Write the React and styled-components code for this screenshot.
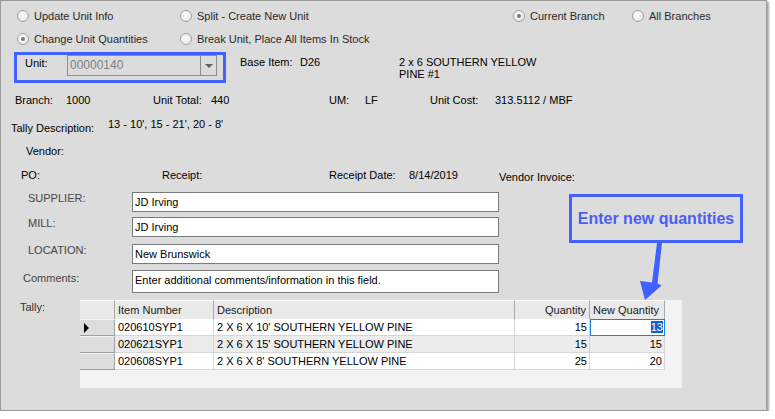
import React from "react";
import styled, { createGlobalStyle } from "styled-components";

const GlobalStyle = createGlobalStyle`
    body {
        margin: 0;
        background: #ffffff;
        font-family: "Liberation Sans", Arial, sans-serif;
        font-size: 11px;
        color: #000;
    }
`

const Window = styled.div`
    position: relative;
    box-sizing: border-box;
    width: 767px;
    height: 411px;
    background: #dcdcdc;
    border: 1px solid #9a9a9a;
    box-shadow: 2px 2px 2px rgba(0, 0, 0, 0.35);
`

const Row = styled.div`
    display: flex;
    align-items: flex-start;
    margin-top: ${(props) => props.$mt || 0}px;
    padding-left: ${(props) => props.$pl || 0}px;
    height: ${(props) => props.$h || 14}px;
    line-height: 14px;
    white-space: nowrap;
`

const Cell = styled.div`
    width: ${(props) => (props.$w ? props.$w + "px" : "auto")};
    padding-top: ${(props) => props.$pt || 0}px;
    color: ${(props) => props.$color || "#000"};
    flex-shrink: 0;
`

const RadioItem = styled.label`
    display: flex;
    align-items: center;
    width: ${(props) => props.$w}px;
    height: 16px;
    color: #2a2a2a;
    flex-shrink: 0;
`

const RadioDot = styled.span`
    box-sizing: border-box;
    width: 12px;
    height: 12px;
    margin-right: 5px;
    border-radius: 50%;
    border: 1px solid #a2a2a2;
    background: radial-gradient(circle at 40% 40%, #ffffff 0%, #ececec 60%, #d6d6d6 100%);
    display: flex;
    align-items: center;
    justify-content: center;

    &::after {
        content: "";
        width: 4px;
        height: 4px;
        border-radius: 50%;
        background: ${(props) => (props.$checked ? "#7a7a7a" : "transparent")};
    }
`

const UnitBox = styled.div`
    box-sizing: border-box;
    display: flex;
    align-items: flex-start;
    width: 212px;
    height: 31px;
    margin-left: 13px;
    border: 3px solid #4060ff;
`

const UnitLabel = styled.div`
    width: 50px;
    padding-left: 8px;
    padding-top: 1px;
    box-sizing: border-box;
    line-height: 14px;
`

const Combo = styled.div`
    box-sizing: border-box;
    display: flex;
    width: 150px;
    height: 21px;
    border: 1px solid #8c8c8c;
    background: #dcdcdc;
`

const ComboText = styled.div`
    flex: 1;
    padding-left: 2px;
    line-height: 19px;
    font-size: 12px;
    color: #808080;
`

const ComboButton = styled.div`
    width: 15px;
    border-left: 1px solid #8c8c8c;
    display: flex;
    align-items: center;
    justify-content: center;

    &::after {
        content: "";
        border-left: 4px solid transparent;
        border-right: 4px solid transparent;
        border-top: 4px solid #606060;
    }
`

const BaseItem = styled.div`
    display: flex;
    margin-left: 14px;
    padding-top: 3px;
    line-height: 14px;
`

const Description = styled.div`
    padding-top: 1px;
    line-height: 12px;
    font-size: 11px;
`

const FieldLabel = styled.div`
    box-sizing: border-box;
    width: 109px;
    padding-left: ${(props) => props.$indent || 0}px;
    padding-top: ${(props) => props.$pt || 0}px;
    line-height: 13px;
    color: #454545;
`

const TextBox = styled.div`
    box-sizing: border-box;
    width: 367px;
    height: ${(props) => props.$h || 20}px;
    padding: 1px 2px 0;
    line-height: 16px;
    background: #ffffff;
    border: 1px solid #7a7a7a;
`

const TallyLabel = styled.div`
    width: 60px;
    color: #333;
`

const Grid = styled.div`
    width: 602px;
    height: 88px;
    background: #f3f3f3;
    display: grid;
    grid-template-columns: 35px 99px 301px 75px 75px;
    grid-template-rows: 19px 17px 17px 17px;
    align-content: start;
    justify-content: start;
`

const HeadCell = styled.div`
    box-sizing: border-box;
    background: #e9e9e9;
    border-right: 1px solid #a8a8a8;
    border-top: 1px solid #ffffff;
    padding: 0 3px;
    line-height: 18px;
    font-size: 11px;
    color: #1a1a1a;
    text-align: ${(props) => props.$align || "left"};
`

const RowHead = styled.div`
    box-sizing: border-box;
    background: #dddddd;
    border-right: 1px solid #a0a0a0;
    border-bottom: 1px solid #a0a0a0;
    border-top: 1px solid #f4f4f4;
    display: flex;
    align-items: center;
    padding-left: 4px;

    &::after {
        content: "";
        display: ${(props) => (props.$current ? "block" : "none")};
        border-top: 5px solid transparent;
        border-bottom: 5px solid transparent;
        border-left: 5px solid #000;
    }
`

const DataCell = styled.div`
    box-sizing: border-box;
    background: ${(props) => (props.$alt ? "#ececec" : "#ffffff")};
    border-right: 1px solid #d6d6d6;
    border-bottom: 1px solid #d6d6d6;
    padding: 0 2px 0 3px;
    line-height: 16px;
    font-size: 11px;
    text-align: ${(props) => props.$align || "left"};
    ${(props) =>
        props.$selected &&
        `
        border: 1px solid #1a7fe0;
        padding-right: 1px;
        line-height: 15px;
    `}
`

const Highlight = styled.span`
    background: #0a64d0;
    color: #ffffff;
`

const Callout = styled.div`
    position: absolute;
    left: 568px;
    top: 193px;
    box-sizing: border-box;
    width: 174px;
    height: 49px;
    border: 3px solid #4060ff;
    display: flex;
    align-items: center;
    justify-content: center;
    font-size: 16px;
    font-weight: bold;
    color: #4a5ef5;
`

const Arrow = styled.svg`
    position: absolute;
    left: 635px;
    top: 239px;
`

const rows = [
    { item: "020610SYP1", desc: "2 X 6 X 10' SOUTHERN YELLOW PINE", qty: 15, newQty: 13 },
    { item: "020621SYP1", desc: "2 X 6 X 15' SOUTHERN YELLOW PINE", qty: 15, newQty: 15 },
    { item: "020608SYP1", desc: "2 X 6 X 8' SOUTHERN YELLOW PINE", qty: 25, newQty: 20 },
];

function Radio({ w, checked, children }) {
    return (
        <RadioItem $w={w}>
            <RadioDot $checked={checked} />
            {children}
        </RadioItem>
    );
}

function Field({ label, indent, pt, mt, h, children }) {
    return (
        <Row $mt={mt} $pl={22} $h={h || 20}>
            <FieldLabel $indent={indent} $pt={pt}>{label}</FieldLabel>
            <TextBox $h={h}>{children}</TextBox>
        </Row>
    );
}

function App() {
    return (
        <>
            <GlobalStyle />
            <Window>
                <Row $mt={7} $pl={16} $h={16}>
                    <Radio w={163}>Update Unit Info</Radio>
                    <Radio w={333}>Split - Create New Unit</Radio>
                    <Radio w={119} checked>Current Branch</Radio>
                    <Radio w={120}>All Branches</Radio>
                </Row>
                <Row $mt={7} $pl={16} $h={16}>
                    <Radio w={163} checked>Change Unit Quantities</Radio>
                    <Radio w={333}>Break Unit, Place All Items In Stock</Radio>
                </Row>

                <Row $mt={5} $h={31}>
                    <UnitBox>
                        <UnitLabel>Unit:</UnitLabel>
                        <Combo>
                            <ComboText>00000140</ComboText>
                            <ComboButton />
                        </Combo>
                    </UnitBox>
                    <BaseItem>
                        <Cell $w={60}>Base Item:</Cell>
                        <Cell $w={99}>D26</Cell>
                        <Description>2 x 6 SOUTHERN YELLOW<br />PINE #1</Description>
                    </BaseItem>
                </Row>

                <Row $mt={10} $pl={14}>
                    <Cell $w={51}>Branch:</Cell>
                    <Cell $w={87}>1000</Cell>
                    <Cell $w={58}>Unit Total:</Cell>
                    <Cell $w={118}>440</Cell>
                    <Cell $w={36}>UM:</Cell>
                    <Cell $w={65}>LF</Cell>
                    <Cell $w={65}>Unit Cost:</Cell>
                    <Cell>313.5112 / MBF</Cell>
                </Row>

                <Row $mt={10} $pl={10} $h={18}>
                    <Cell $w={97} $pt={4}>Tally Description:</Cell>
                    <Cell>13 - 10', 15 - 21', 20 - 8'</Cell>
                </Row>

                <Row $mt={9} $pl={25}>
                    <Cell>Vendor:</Cell>
                </Row>

                <Row $mt={10} $pl={20}>
                    <Cell $w={141}>PO:</Cell>
                    <Cell $w={167}>Receipt:</Cell>
                    <Cell $w={80}>Receipt Date:</Cell>
                    <Cell $w={90}>8/14/2019</Cell>
                    <Cell $pt={2}>Vendor Invoice:</Cell>
                </Row>

                <Field mt={10} indent={5} label="SUPPLIER:">JD Irving</Field>
                <Field mt={5} indent={5} label="MILL:">JD Irving</Field>
                <Field mt={7} indent={5} label="LOCATION:">New Brunswick</Field>
                <Field mt={6} h={23} pt={2} label="Comments:">
                    Enter additional comments/information in this field.
                </Field>

                <Row $mt={7} $pl={19} $h={88}>
                    <TallyLabel>Tally:</TallyLabel>
                    <Grid>
                        <HeadCell />
                        <HeadCell>Item Number</HeadCell>
                        <HeadCell>Description</HeadCell>
                        <HeadCell $align="right">Quantity</HeadCell>
                        <HeadCell>New Quantity</HeadCell>
                        {rows.map((r, i) => (
                            <React.Fragment key={r.item}>
                                <RowHead $current={i === 0} />
                                <DataCell $alt={i === 1}>{r.item}</DataCell>
                                <DataCell $alt={i === 1}>{r.desc}</DataCell>
                                <DataCell $alt={i === 1} $align="right">{r.qty}</DataCell>
                                <DataCell $alt={i === 1} $align="right" $selected={i === 0}>
                                    {i === 0 ? <Highlight>{r.newQty}</Highlight> : r.newQty}
                                </DataCell>
                            </React.Fragment>
                        ))}
                    </Grid>
                </Row>

                <Callout>Enter new quantities</Callout>
                <Arrow width="30" height="62" viewBox="0 0 30 62">
                    <polygon
                        points="21,3 26,3 21.5,43.5 25.5,45.5 9,60 4,41 16,42.5"
                        fill="#4060ff"
                    />
                </Arrow>
            </Window>
        </>
    );
}

export default App
